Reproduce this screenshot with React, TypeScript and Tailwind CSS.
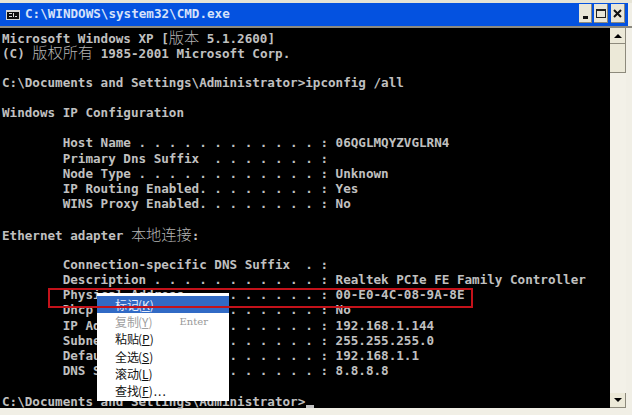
import React from "react";

const lines: string[] = [
  "Microsoft Windows XP [版本 5.1.2600]",
  "(C) 版权所有 1985-2001 Microsoft Corp.",
  "",
  "C:\\Documents and Settings\\Administrator>ipconfig /all",
  "",
  "Windows IP Configuration",
  "",
  "        Host Name . . . . . . . . . . . . : 06QGLMQYZVGLRN4",
  "        Primary Dns Suffix  . . . . . . . :",
  "        Node Type . . . . . . . . . . . . : Unknown",
  "        IP Routing Enabled. . . . . . . . : Yes",
  "        WINS Proxy Enabled. . . . . . . . : No",
  "",
  "Ethernet adapter 本地连接:",
  "",
  "        Connection-specific DNS Suffix  . :",
  "        Description . . . . . . . . . . . : Realtek PCIe FE Family Controller",
  "        Physical Address. . . . . . . . . : 00-E0-4C-08-9A-8E",
  "        Dhcp Enabled. . . . . . . . . . . : No",
  "        IP Address. . . . . . . . . . . . : 192.168.1.144",
  "        Subnet Mask . . . . . . . . . . . : 255.255.255.0",
  "        Default Gateway . . . . . . . . . : 192.168.1.1",
  "        DNS Servers . . . . . . . . . . . : 8.8.8.8",
  "",
  "C:\\Documents and Settings\\Administrator>",
];

const menuItems = [
  { label: "标记", key: "K", active: true },
  { label: "复制", key: "Y", disabled: true, hint: "Enter" },
  { label: "粘贴", key: "P" },
  { label: "全选", key: "S" },
  { label: "滚动", key: "L" },
  { label: "查找", key: "F", tail: "..." },
];

// CJK runs sit in a two-cell box, like the console does
function ConsoleLine({ text }: { text: string }) {
  const parts = text.split(/([\u4e00-\u9fff]+)/);
  return (
    <div className="h-[15.2px] whitespace-pre">
      {parts.map((part, i) =>
        /[\u4e00-\u9fff]/.test(part) ? (
          <span key={i} className="font-['Noto_Sans_CJK_SC',sans-serif] text-[15.2px] font-light text-[#b4b4b4]">
            {part}
          </span>
        ) : (
          <span key={i}>{part}</span>
        )
      )}
    </div>
  );
}

function CaptionButton({ children, className }: { children: React.ReactNode; className: string }) {
  return (
    <div className={`flex h-[19px] items-center justify-center border-r border-b border-[#8d8a7c] bg-[#e9e6d8] ${className}`}>
      {children}
    </div>
  );
}

function App() {
  return (
    <div className="flex h-[415px] w-[632px] flex-col overflow-hidden bg-[#f1efe6] font-['DejaVu_Sans_Mono',monospace]">
      <div className="h-[3px] bg-[#e6e4d6]" />
      {/* title bar */}
      <div className="mr-[4px] flex h-[23px] items-center bg-[#0452e0] pl-[6px]">
        <svg width="14" height="10" viewBox="0 0 14 10" className="shrink-0">
          <rect width="14" height="10" fill="#d8d8d8" />
          <rect x="1" y="2" width="12" height="7" fill="#111" />
          <path d="M3 3h3v1H3zM3 6h3v1H3zM7 3h1v4H7zM9 6h2v1H9z" fill="#ddd" />
        </svg>
        <span className="ml-[5px] text-[12.6px] leading-none font-bold text-[#d6e2fa]">C:\WINDOWS\system32\CMD.exe</span>
        <div className="mt-[1px] ml-auto flex self-start pr-[3px]">
          <CaptionButton className="mr-[2px] w-[13px]">
            <div className="mt-[9px] h-[3px] w-[5px] bg-[#111]" />
          </CaptionButton>
          <CaptionButton className="mr-[3px] w-[14px]">
            <div className="h-[9px] w-[10px] border border-t-2 border-[#222]" />
          </CaptionButton>
          <CaptionButton className="w-[14px]">
            <svg width="9" height="9" viewBox="0 0 9 9">
              <path d="M1 1l7 7M8 1L1 8" stroke="#111" strokeWidth="2" />
            </svg>
          </CaptionButton>
        </div>
      </div>
      <div className="h-[2px] bg-[#8c8a80]" />

      <div className="flex min-h-0 flex-1">
        {/* console */}
        <div className="relative h-[380px] w-[610px] shrink-0 bg-black pt-[1px] pl-[2px] text-[12.6px] leading-[15.2px] font-bold text-[#c0c0c0]">
          {lines.map((line, i) => (
            <ConsoleLine key={i} text={line} />
          ))}
          <div className="absolute top-[377px] left-[306px] h-[3px] w-[8px] bg-[#c0c0c0]" />

          {/* context menu */}
          <div className="absolute top-[265px] left-[97px] flex h-[108px] w-[132px] flex-col bg-white pt-[3px] font-['Noto_Sans_CJK_SC',sans-serif] text-[12px] leading-[17px] font-normal text-[#111]">
            {menuItems.map((item) => (
              <div
                key={item.key}
                className={`flex h-[17.2px] items-center pl-[18px] ${item.active ? "bg-[#316ac5] text-[#e8eefc]" : ""} ${item.disabled ? "text-[#a0a0a0]" : ""}`}
              >
                <span>{item.label}</span>
                <span className="-ml-px">
                  (<span className="underline">{item.key}</span>)
                </span>
                {item.tail && <span className="ml-px tracking-[1px]">{item.tail}</span>}
                {item.hint && <span className="ml-[27px] font-['DejaVu_Serif',serif] text-[10px] text-[#999]">{item.hint}</span>}
              </div>
            ))}
          </div>

          {/* red marker, drawn over the menu */}
          <div className="absolute top-[260px] left-[48px] h-[20px] w-[425px] border-2 border-[#c4121a]" />
        </div>

        {/* scrollbar */}
        <div className="flex h-[380px] w-[16px] shrink-0 flex-col bg-[#f3f1e8]">
          <div className="flex h-[16px] items-center justify-center border-r border-b border-[#8d8a7c] bg-[#ece9d8]">
            <div className="h-0 w-0 border-x-[4px] border-b-[4px] border-x-transparent border-b-black" />
          </div>
          <div className="h-[29px] border-r border-b border-[#8d8a7c] bg-[#ece9d8]" />
          <div className="flex-1" />
          <div className="flex h-[15px] items-center justify-center border-r border-b border-[#8d8a7c] bg-[#ece9d8]">
            <div className="h-0 w-0 border-x-[4px] border-t-[4px] border-x-transparent border-t-black" />
          </div>
        </div>
      </div>
    </div>
  );
}

export default App;
